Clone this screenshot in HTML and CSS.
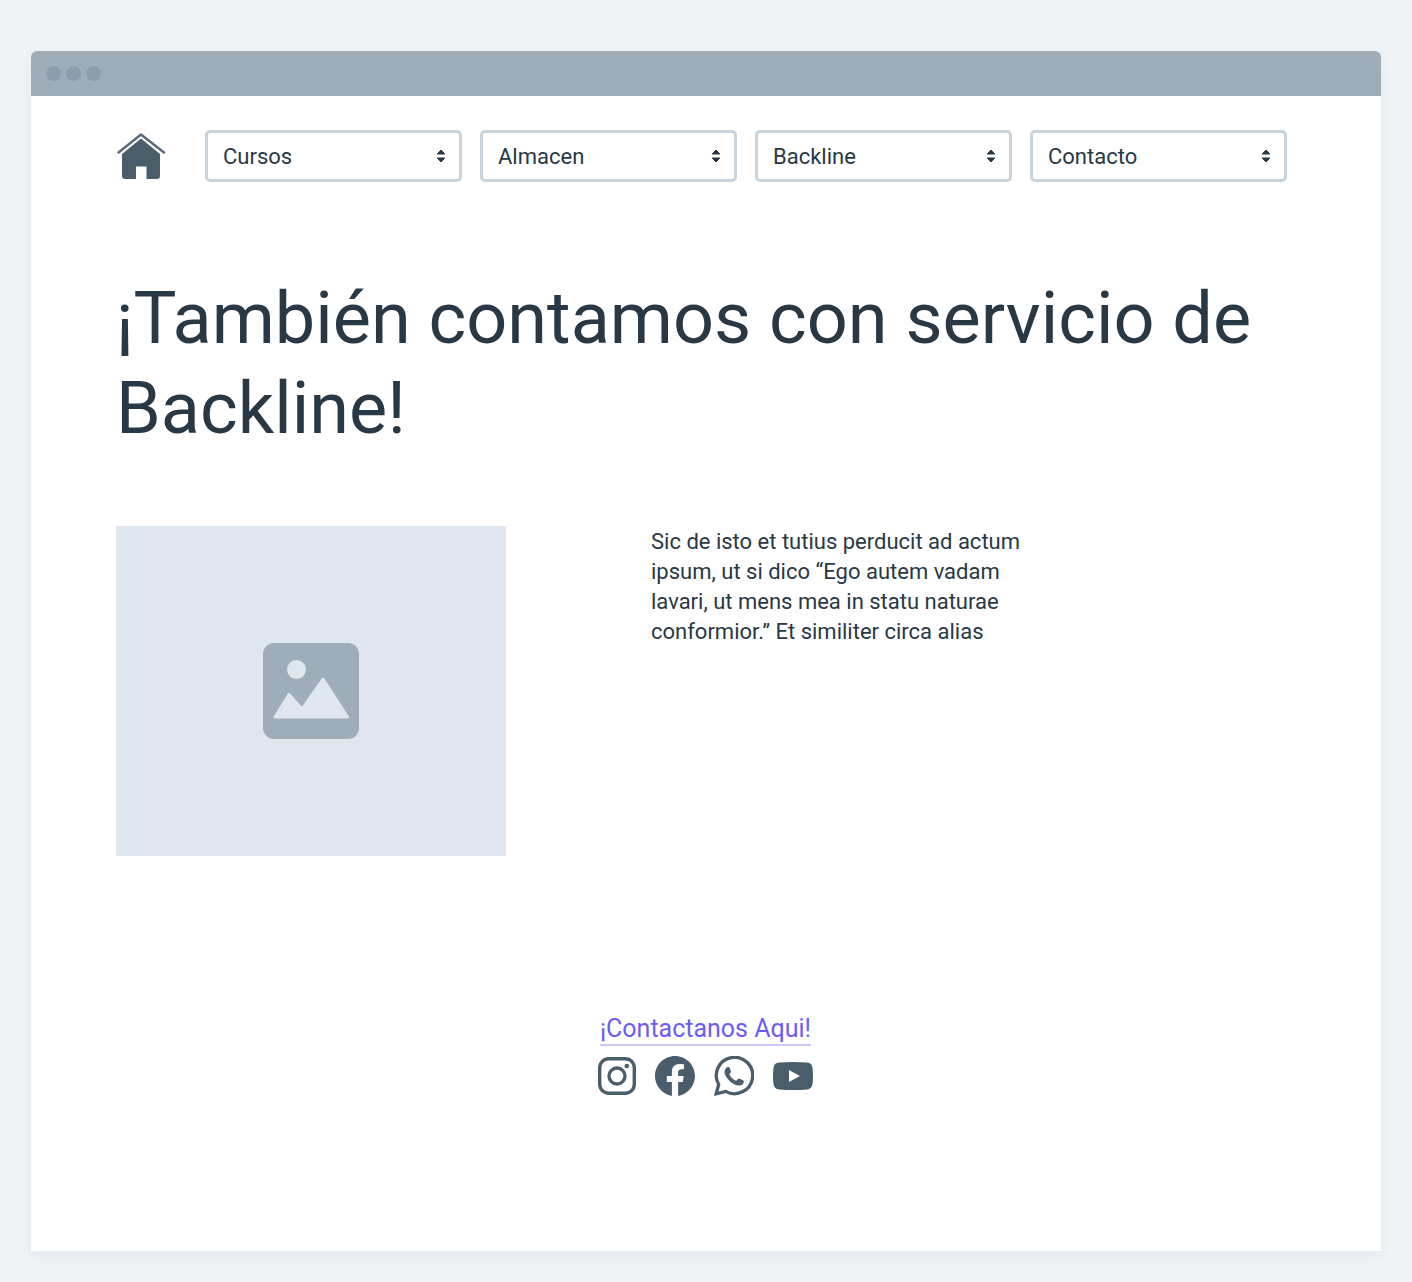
FILE: index.html
```html
<!DOCTYPE html>
<html lang="es">
<head>
<meta charset="utf-8">
<meta name="viewport" content="width=device-width, initial-scale=1">
<title>Backline</title>
<link rel="stylesheet" href="styles.css">
</head>
<body>
<div class="window">
  <div class="titlebar"><span class="dot"></span><span class="dot"></span><span class="dot"></span></div>
  <div class="page">
    <nav class="nav">
      <a class="home" href="#" aria-label="Inicio">
        <svg viewBox="0 0 50 50" width="50" height="50" aria-hidden="true">
          <path d="M2.500 21.500 25 3.500 48 21.500" fill="none" stroke="#5b6b7a" stroke-width="2.500" stroke-linecap="round" stroke-linejoin="round"/>
          <path d="M25 7.500 44 23V45Q44 48 41 48H30.500V35.500H20V48H9Q6 48 6 45V23Z" fill="#4a5d6b"/>
        </svg>
      </a>
      <div class="menus">
        <div class="menu">
          <select class="select" aria-label="Cursos"><option>Cursos</option></select>
          <svg class="arrows" viewBox="0 0 10 14" width="10" height="14" aria-hidden="true"><path d="M5 1 8.800 5H1.200ZM5 13 1.200 9H8.800Z"/></svg>
        </div>
        <div class="menu">
          <select class="select" aria-label="Almacen"><option>Almacen</option></select>
          <svg class="arrows" viewBox="0 0 10 14" width="10" height="14" aria-hidden="true"><path d="M5 1 8.800 5H1.200ZM5 13 1.200 9H8.800Z"/></svg>
        </div>
        <div class="menu">
          <select class="select" aria-label="Backline"><option>Backline</option></select>
          <svg class="arrows" viewBox="0 0 10 14" width="10" height="14" aria-hidden="true"><path d="M5 1 8.800 5H1.200ZM5 13 1.200 9H8.800Z"/></svg>
        </div>
        <div class="menu">
          <select class="select" aria-label="Contacto"><option>Contacto</option></select>
          <svg class="arrows" viewBox="0 0 10 14" width="10" height="14" aria-hidden="true"><path d="M5 1 8.800 5H1.200ZM5 13 1.200 9H8.800Z"/></svg>
        </div>
      </div>
    </nav>

    <h1 class="title">¡También contamos con servicio de Backline!</h1>

    <section class="intro">
      <div class="picture">
        <svg viewBox="0 0 96 96" width="96" height="96" aria-hidden="true">
          <rect width="96" height="96" rx="11" fill="#9eadba"/>
          <circle cx="33.500" cy="26.500" r="9.500" fill="#dfe6ee"/>
          <path d="M12 74 26 51.500 39 66 60 36 84.500 74Z" fill="#dfe6ee" stroke="#dfe6ee" stroke-width="3" stroke-linejoin="round"/>
        </svg>
      </div>
      <p class="text">Sic de isto et tutius perducit ad actum ipsum, ut si dico “Ego autem vadam lavari, ut mens mea in statu naturae conformior.” Et similiter circa alias</p>
    </section>

    <footer class="footer">
      <a class="contact" href="#">¡Contactanos Aqui!</a>
      <div class="social">
        <a href="#" aria-label="Instagram">
          <svg viewBox="0 0 38 38" width="38" height="38" fill="none" stroke="#4a5d6b" stroke-width="3.400" aria-hidden="true">
            <rect x="1.700" y="1.700" width="34.600" height="34.600" rx="9"/><circle cx="19" cy="19" r="8"/><circle cx="28.800" cy="9" r="2.300" fill="#4a5d6b" stroke="none"/>
          </svg>
        </a>
        <a href="#" aria-label="Facebook">
          <svg viewBox="0 0 24 24" width="40" height="40" aria-hidden="true"><path fill="#4a5d6b" d="M24 12.073c0-6.627-5.373-12-12-12s-12 5.373-12 12c0 5.990 4.388 10.954 10.125 11.854v-8.385H7.078v-3.470h3.047V9.430c0-3.007 1.792-4.669 4.533-4.669 1.312 0 2.686.235 2.686.235v2.953H15.830c-1.491 0-1.956.925-1.956 1.874v2.250h3.328l-.532 3.470h-2.796v8.385C19.612 23.027 24 18.062 24 12.073z"/></svg>
        </a>
        <a href="#" aria-label="WhatsApp">
          <svg viewBox="0 0 40 40" width="40" height="40" aria-hidden="true">
            <path d="M2.200 37.800 4.700 28.500A18.200 18.200 0 1 1 11.700 35.400Z" fill="none" stroke="#4a5d6b" stroke-width="3.300"/>
            <path fill="#4a5d6b" d="M11.200 13.500C12 11.600 13.500 10.800 14.700 11.100C15.400 11.300 15.700 12 17 15.500C17.300 16.600 15.500 17.600 15.400 18.500C15.400 19.500 19.500 24 21.800 24.600C23 24.900 24 22.400 25 22.600C26.200 22.900 29 24.300 29.800 24.900C30.300 25.400 29.300 28 28 28.800C25.500 30.300 22 29.200 18.500 27.200C14.500 24.700 11.500 20.300 10.800 17.800C10.400 16.200 10.600 14.700 11.200 13.500Z"/>
          </svg>
        </a>
        <a href="#" aria-label="YouTube">
          <svg viewBox="0 0 40 28" width="40" height="28" aria-hidden="true"><path fill="#4a5d6b" fill-rule="evenodd" d="M6 .6Q20-.6 34 .6Q39 1 39.500 6Q40.500 14 39.500 22Q39 27 34 27.400Q20 28.600 6 27.400Q1 27 .5 22Q-.5 14 .5 6Q1 1 6 .6ZM16 8V20L27 14Z"/></svg>
        </a>
      </div>
    </footer>
  </div>
</div>
</body>
</html>
```
FILE: styles.css
```css
* { box-sizing: border-box; }

body {
  margin: 0;
  padding: 51px 31px 31px;
  min-height: 100vh;
  display: flex;
  background: #eff3f6;
  color: #293845;
  font-family: Roboto, "Liberation Sans", sans-serif;
}

.window {
  flex: 1;
  display: flex;
  flex-direction: column;
  background: #fff;
  border-radius: 6px 6px 0 0;
  box-shadow: 0 5px 12px rgba(41, 56, 69, 0.06);
}

.titlebar {
  display: flex;
  align-items: center;
  gap: 5px;
  height: 45px;
  padding: 0 15px;
  background: #9eadba;
  border-radius: 6px 6px 0 0;
}

.dot {
  width: 15px;
  height: 15px;
  border-radius: 50%;
  background: #8e9dad;
}

.page { padding: 34px 94px 40px 85px; }

.nav {
  display: flex;
  align-items: center;
  gap: 39px;
}

.home, .home svg, .social a, .social svg { display: block; }

.menus {
  flex: 1;
  display: grid;
  grid-template-columns: repeat(4, 1fr);
  gap: 18px;
}

.menu { display: grid; align-items: center; }

.select {
  grid-area: 1 / 1;
  appearance: none;
  width: 100%;
  height: 52px;
  padding: 0 40px 0 15px;
  border: 3px solid #c9d3dc;
  border-radius: 5px;
  background: #fff;
  color: inherit;
  font: inherit;
  font-size: 22px;
}

.arrows {
  grid-area: 1 / 1;
  justify-self: end;
  margin-right: 16px;
  fill: #293845;
  stroke: #293845;
  stroke-width: 1px;
  stroke-linejoin: round;
  pointer-events: none;
}

.title {
  margin: 92px 0 0;
  font-size: 72px;
  font-weight: 400;
  line-height: 90px;
}

.intro {
  display: flex;
  align-items: flex-start;
  gap: 145px;
  margin-top: 72px;
}

.picture {
  display: flex;
  align-items: center;
  justify-content: center;
  width: 390px;
  height: 330px;
  background: #dfe6ee;
}

.text {
  flex: 0 1 380px;
  margin: 0;
  padding-top: 1px;
  font-size: 22px;
  line-height: 30px;
}

.footer {
  display: flex;
  flex-direction: column;
  align-items: center;
  gap: 10px;
  margin-top: 158px;
  padding-left: 8px;
}

.contact {
  border-bottom: 2px solid #cfc8ff;
  color: #6c5cf5;
  font-size: 25px;
  line-height: 30px;
  text-decoration: none;
}

.social {
  display: flex;
  align-items: center;
  gap: 19px;
}
```
